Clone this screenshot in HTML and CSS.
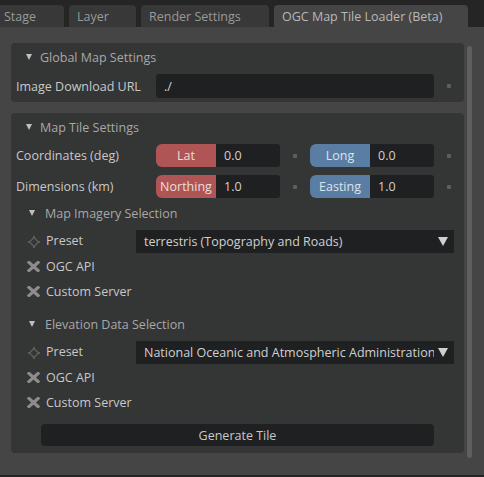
FILE: index.html
```html
<!DOCTYPE html>
<html>
<head>
<meta charset="utf-8">
<link rel="stylesheet" href="styles.css">
</head>
<body>
<div class="tabbar">
  <div class="tab tab-first" style="width:64px">Stage</div>
  <div class="tab" style="width:67px">Layer</div>
  <div class="tab" style="width:128px">Render Settings</div>
  <div class="tab tab-active" style="width:194px">OGC Map Tile Loader (Beta)</div>
</div>
<div class="main">
  <div class="content">
    <div class="frame frame-global">
      <div class="frame-header"><span class="tri"></span>Global Map Settings</div>
      <div class="row row-url">
        <div class="label">Image Download URL</div>
        <div class="field"><div class="input input-wide">./</div></div>
        <div class="dot"></div>
      </div>
    </div>
    <div class="frame frame-tile">
      <div class="frame-header"><span class="tri"></span>Map Tile Settings</div>
      <div class="row row-num">
        <div class="label">Coordinates (deg)</div>
        <div class="field">
          <div class="pair"><div class="tag tag-red">Lat</div><div class="input input-num">0.0</div></div>
          <div class="dot"></div>
          <div class="pair pair-second"><div class="tag tag-blue">Long</div><div class="input input-num">0.0</div></div>
        </div>
        <div class="dot"></div>
      </div>
      <div class="row row-num row-dim">
        <div class="label">Dimensions (km)</div>
        <div class="field">
          <div class="pair"><div class="tag tag-red">Northing</div><div class="input input-num">1.0</div></div>
          <div class="dot"></div>
          <div class="pair pair-second"><div class="tag tag-blue">Easting</div><div class="input input-num">1.0</div></div>
        </div>
        <div class="dot"></div>
      </div>

      <div class="subheader"><span class="tri tri-small"></span>Map Imagery Selection</div>
      <div class="opt opt-preset">
        <span class="icon">
          <svg width="12" height="12" viewBox="0 0 12 12"><path d="M6 1.5 L10.5 6 L6 10.5 L1.5 6 Z" fill="none" stroke="#5c5c5c" stroke-width="1.5"/><rect x="5" y="0" width="2" height="2.5" fill="#5c5c5c"/><rect x="5" y="9.5" width="2" height="2.5" fill="#5c5c5c"/><rect x="0" y="5" width="2.5" height="2" fill="#5c5c5c"/><rect x="9.5" y="5" width="2.5" height="2" fill="#5c5c5c"/></svg>
        </span>
        <span class="opt-label">Preset</span>
        <div class="dropdown"><span>terrestris (Topography and Roads)</span><span class="arrow"></span></div>
      </div>
      <div class="opt">
        <span class="icon"><svg width="13" height="11" viewBox="0 0 13 11"><path d="M2 1.5 L11 9.5 M11 1.5 L2 9.5" stroke="#8c8c8c" stroke-width="3.2" stroke-linecap="square"/></svg></span>
        <span class="opt-label">OGC API</span>
      </div>
      <div class="opt">
        <span class="icon"><svg width="13" height="11" viewBox="0 0 13 11"><path d="M2 1.5 L11 9.5 M11 1.5 L2 9.5" stroke="#8c8c8c" stroke-width="3.2" stroke-linecap="square"/></svg></span>
        <span class="opt-label">Custom Server</span>
      </div>

      <div class="subheader subheader-2"><span class="tri tri-small"></span>Elevation Data Selection</div>
      <div class="opt opt-preset">
        <span class="icon">
          <svg width="12" height="12" viewBox="0 0 12 12"><path d="M6 1.5 L10.5 6 L6 10.5 L1.5 6 Z" fill="none" stroke="#5c5c5c" stroke-width="1.5"/><rect x="5" y="0" width="2" height="2.5" fill="#5c5c5c"/><rect x="5" y="9.5" width="2" height="2.5" fill="#5c5c5c"/><rect x="0" y="5" width="2.5" height="2" fill="#5c5c5c"/><rect x="9.5" y="5" width="2.5" height="2" fill="#5c5c5c"/></svg>
        </span>
        <span class="opt-label">Preset</span>
        <div class="dropdown"><span class="dd-text">National Oceanic and Atmospheric Administration</span><span class="arrow"></span></div>
      </div>
      <div class="opt">
        <span class="icon"><svg width="13" height="11" viewBox="0 0 13 11"><path d="M2 1.5 L11 9.5 M11 1.5 L2 9.5" stroke="#8c8c8c" stroke-width="3.2" stroke-linecap="square"/></svg></span>
        <span class="opt-label">OGC API</span>
      </div>
      <div class="opt">
        <span class="icon"><svg width="13" height="11" viewBox="0 0 13 11"><path d="M2 1.5 L11 9.5 M11 1.5 L2 9.5" stroke="#8c8c8c" stroke-width="3.2" stroke-linecap="square"/></svg></span>
        <span class="opt-label">Custom Server</span>
      </div>

      <div class="btn-row"><div class="button">Generate Tile</div></div>
    </div>
  </div>
  <div class="scrollbar"></div>
</div>
<div class="bottombar"></div>
</body>
</html>
```

FILE: styles.css
```css
html, body {
  margin: 0;
  padding: 0;
}
body {
  width: 484px;
  height: 477px;
  background: #454545;
  font-family: "Open Sans", "Noto Sans", sans-serif;
  font-size: 12.5px;
  color: #c8c8c8;
  overflow: hidden;
  display: flex;
  flex-direction: column;
}
.tabbar {
  height: 27px;
  background: #252525;
  display: flex;
  align-items: flex-end;
  gap: 5px;
  flex: none;
}
.tab {
  height: 22px;
  box-sizing: border-box;
  background: #383838;
  color: #9a9a9a;
  border-radius: 4px 4px 0 0;
  padding-left: 8px;
  line-height: 23px;
  white-space: nowrap;
}
.tab-first {
  padding-left: 4px;
  border-radius: 0 4px 0 0;
}
.tab-active {
  background: #454545;
  color: #b8b8b8;
}
.main {
  flex: 1;
  display: flex;
  padding: 16px 0 0 11px;
  min-height: 0;
}
.content {
  width: 453px;
  display: flex;
  flex-direction: column;
  gap: 11px;
}
.frame {
  background: #343535;
  border-radius: 4px;
  display: flex;
  flex-direction: column;
  padding: 0 0 0 5px;
}
.frame-global {
  height: 59px;
  box-sizing: border-box;
}
.frame-tile {
  padding-bottom: 7px;
}
.frame-header {
  height: 28px;
  display: flex;
  align-items: center;
  color: #a8a8a8;
  padding-left: 10px;
}
.tri {
  width: 0;
  height: 0;
  border-left: 3px solid transparent;
  border-right: 3px solid transparent;
  border-top: 6px solid #c0c0c0;
  margin-right: 8px;
}
.row {
  display: flex;
  align-items: center;
}
.row-url {
  height: 24px;
  margin-top: 3px;
}
.label {
  width: 140px;
  flex: none;
  color: #c8c8c8;
}
.field {
  width: 278px;
  display: flex;
  align-items: center;
}
.input {
  background: #1f2021;
  height: 100%;
  box-sizing: border-box;
  display: flex;
  align-items: center;
  padding-left: 8px;
  color: #d0d0d0;
}
.input-wide {
  width: 278px;
  height: 24px;
  border-radius: 3px;
}
.dot {
  width: 4px;
  height: 4px;
  border-radius: 1px;
  background: #5e5e5e;
  margin-left: 13px;
  flex: none;
}
.field .dot {
  margin-left: 13px;
  margin-right: 13px;
}
.row-num {
  height: 23px;
  margin-top: 3px;
}
.row-dim {
  margin-top: 8px;
}
.pair {
  display: flex;
  height: 23px;
  width: 124px;
}
.tag {
  width: 60px;
  height: 23px;
  border-radius: 6px 0 0 6px;
  display: flex;
  align-items: center;
  justify-content: center;
  color: #e8dede;
  flex: none;
}
.tag-red {
  background: #b05555;
}
.tag-blue {
  background: #5a7da3;
  color: #dde3ea;
}
.input-num {
  width: 64px;
  height: 23px;
  padding-left: 8px;
  border-radius: 0 3px 3px 0;
}
.subheader {
  height: 24px;
  margin-top: 3px;
  display: flex;
  align-items: center;
  color: #a8a8a8;
  padding-left: 13px;
}
.subheader-2 {
  margin-top: 9px;
}
.tri-small {
  margin-right: 10px;
}
.opt {
  height: 24px;
  display: flex;
  align-items: center;
  margin-top: 1px;
  padding-left: 11px;
}
.opt-preset {
  height: 23px;
  margin-top: 5px;
}
.icon {
  width: 13px;
  height: 12px;
  display: flex;
  align-items: center;
  justify-content: center;
  margin-right: 6px;
}
.opt-label {
  width: 90px;
  color: #c8c8c8;
}
.opt-preset .opt-label {
  position: relative;
  top: -1px;
}
.dropdown {
  width: 318px;
  height: 23px;
  background: #1f2021;
  display: flex;
  align-items: center;
  justify-content: space-between;
  padding: 0 6px 0 8px;
  box-sizing: border-box;
  color: #d0d0d0;
  white-space: nowrap;
  overflow: hidden;
}
.dd-text {
  overflow: hidden;
}
.arrow {
  width: 0;
  height: 0;
  border-left: 5.5px solid transparent;
  border-right: 5.5px solid transparent;
  border-top: 9px solid #d0d0d0;
  flex: none;
  margin-left: 4px;
}
.btn-row {
  margin-top: 10px;
  padding-left: 25px;
}
.button {
  width: 393px;
  height: 22px;
  background: #1f2021;
  border-radius: 4px;
  display: flex;
  align-items: center;
  justify-content: center;
  color: #c8c8c8;
}
.scrollbar {
  width: 5px;
  height: 412px;
  margin-top: 3px;
  margin-left: 3px;
  background: #5e5e5e;
  border-radius: 2px;
}
.bottombar {
  height: 2px;
  background: #252525;
  flex: none;
}
```
